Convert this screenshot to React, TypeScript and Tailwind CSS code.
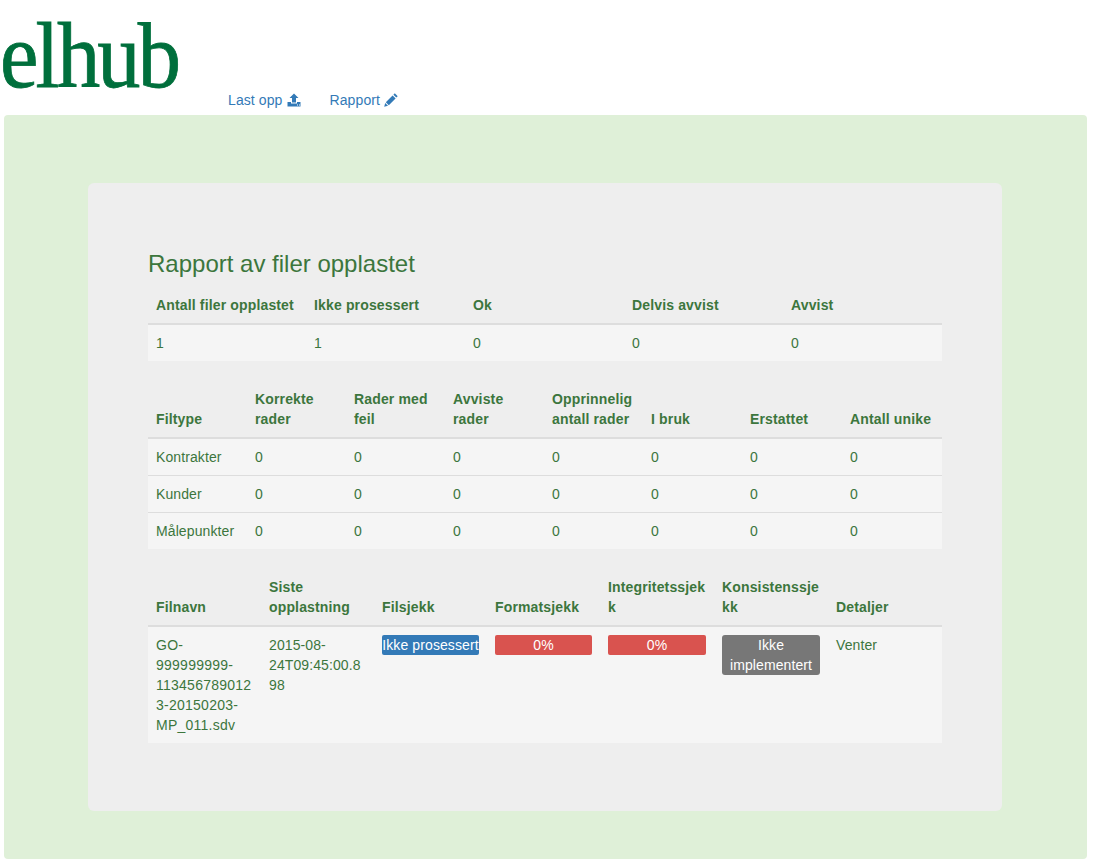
const headerCell = "p-2 text-left align-bottom font-bold tracking-[0.15px] border-b-2 border-[#dddddd] [overflow-wrap:break-word]";
const plainCell = "p-2 align-top [overflow-wrap:break-word]";
const borderedCell = "p-2 align-top border-t border-[#dddddd] [overflow-wrap:break-word]";

function UploadIcon() {
  return (
    <svg width="14" height="14" viewBox="0 0 14 14" fill="#337ab7">
      <path d="M7 0.5 L11.5 5 H9 V9.5 H5 V5 H2.5 Z" />
      <path d="M0.5 9 H4 V10.5 H10 V9 H13.5 V13.5 H0.5 Z" />
      <rect x="10" y="11.5" width="1" height="1" fill="#fff" />
      <rect x="12" y="11.5" width="1" height="1" fill="#fff" />
    </svg>
  );
}

function PencilIcon() {
  return (
    <svg width="14" height="14" viewBox="0 0 14 14" fill="#337ab7">
      <path d="M10.8 0.3 L13.7 3.2 L12.3 4.6 L9.4 1.7 Z" />
      <path d="M8.6 2.4 L11.6 5.4 L4.8 12.2 L1.8 9.2 Z" />
      <path d="M1.2 10 L4 12.8 L0.2 13.8 Z" />
    </svg>
  );
}

function SummaryTable() {
  const cols = [
    { label: "Antall filer opplastet", width: "w-[158px]" },
    { label: "Ikke prosessert", width: "w-[159px]" },
    { label: "Ok", width: "w-[159px]" },
    { label: "Delvis avvist", width: "w-[159px]" },
    { label: "Avvist", width: "w-[159px]" },
  ];
  const vals = ["1", "1", "0", "0", "0"];
  return (
    <table className="w-full table-fixed border-collapse mb-5">
      <colgroup>
        {cols.map((c) => (
          <col key={c.label} className={c.width} />
        ))}
      </colgroup>
      <thead>
        <tr>
          {cols.map((c) => (
            <th key={c.label} className={headerCell}>{c.label}</th>
          ))}
        </tr>
      </thead>
      <tbody>
        <tr className="bg-[#f5f5f5]">
          {vals.map((v, i) => (
            <td key={i} className={plainCell}>{v}</td>
          ))}
        </tr>
      </tbody>
    </table>
  );
}

function FiletypeTable() {
  const cols = [
    { label: "Filtype", width: "w-[99px]" },
    { label: "Korrekte rader", width: "w-[99px]" },
    { label: "Rader med feil", width: "w-[99px]" },
    { label: "Avviste rader", width: "w-[99px]" },
    { label: "Opprinnelig antall rader", width: "w-[99px]" },
    { label: "I bruk", width: "w-[99px]" },
    { label: "Erstattet", width: "w-[100px]" },
    { label: "Antall unike", width: "w-[100px]" },
  ];
  const rows = ["Kontrakter", "Kunder", "Målepunkter"];
  return (
    <table className="w-full table-fixed border-collapse mb-5">
      <colgroup>
        {cols.map((c) => (
          <col key={c.label} className={c.width} />
        ))}
      </colgroup>
      <thead>
        <tr>
          {cols.map((c) => (
            <th key={c.label} className={headerCell}>{c.label}</th>
          ))}
        </tr>
      </thead>
      <tbody>
        {rows.map((r, idx) => (
          <tr key={r} className="bg-[#f5f5f5]">
            <td className={idx === 0 ? plainCell : borderedCell}>{r}</td>
            {[0, 1, 2, 3, 4, 5, 6].map((i) => (
              <td key={i} className={idx === 0 ? plainCell : borderedCell}>0</td>
            ))}
          </tr>
        ))}
      </tbody>
    </table>
  );
}

function FilesTable() {
  const cols = [
    { label: "Filnavn", width: "w-[113px]" },
    { label: "Siste opplastning", width: "w-[113px]" },
    { label: "Filsjekk", width: "w-[113px]" },
    { label: "Formatsjekk", width: "w-[113px]" },
    { label: "Integritetssjekk", width: "w-[114px]" },
    { label: "Konsistenssjekk", width: "w-[114px]" },
    { label: "Detaljer", width: "w-[114px]" },
  ];
  return (
    <table className="w-full table-fixed border-collapse mb-5">
      <colgroup>
        {cols.map((c) => (
          <col key={c.label} className={c.width} />
        ))}
      </colgroup>
      <thead>
        <tr>
          {cols.map((c) => (
            <th key={c.label} className={headerCell}>{c.label}</th>
          ))}
        </tr>
      </thead>
      <tbody>
        <tr className="bg-[#f5f5f5]">
          <td className={plainCell + " tracking-[0.25px]"}>GO-999999999-1134567890123-20150203-MP_011.sdv</td>
          <td className={plainCell}>2015-08-24T09:45:00.898</td>
          <td className={plainCell}>
            <div className="h-5 rounded-[2px] bg-[#337ab7] text-center text-white whitespace-nowrap overflow-hidden">Ikke prosessert</div>
          </td>
          <td className={plainCell}>
            <div className="h-5 rounded-[2px] bg-[#d9534f] text-center text-white">0%</div>
          </td>
          <td className={plainCell}>
            <div className="h-5 rounded-[2px] bg-[#d9534f] text-center text-white">0%</div>
          </td>
          <td className={plainCell}>
            <div className="rounded-[3px] bg-[#777777] text-center text-white">Ikke implementert</div>
          </td>
          <td className={plainCell}>Venter</td>
        </tr>
      </tbody>
    </table>
  );
}

export default function App() {
  return (
    <div className="bg-white text-sm/5 tracking-[0.1px] text-[#3c763d] font-['Liberation_Sans',Arial,sans-serif] pb-[3px]">
      {/* Header */}
      <header className="flex items-end h-[115px]">
        <div className="w-[228px] h-full">
          <span className="inline-block origin-left scale-x-[0.92] pt-[7px] text-[94px]/[96px] tracking-[-3px] text-[#006f3c] [-webkit-text-stroke:0.8px_#006f3c] font-['Liberation_Serif',serif] whitespace-nowrap">
            elhub
          </span>
        </div>
        <nav className="flex gap-[29px] pb-[5px] text-[#337ab7]">
          <a className="flex items-center gap-1">Last opp <UploadIcon /></a>
          <a className="flex items-center gap-1">Rapport <PencilIcon /></a>
        </nav>
      </header>

      {/* Green well */}
      <div className="ml-1 w-[1083px] rounded bg-[#dff0d8] pt-[68px] pb-12 pl-[84px]">
        <div className="w-[914px] rounded-md bg-[#eeeeee] px-[60px] py-12">
          <h3 className="mt-5 mb-2.5 text-2xl/[26.4px] font-normal tracking-normal">Rapport av filer opplastet</h3>
          <SummaryTable />
          <FiletypeTable />
          <FilesTable />
        </div>
      </div>
    </div>
  );
}
